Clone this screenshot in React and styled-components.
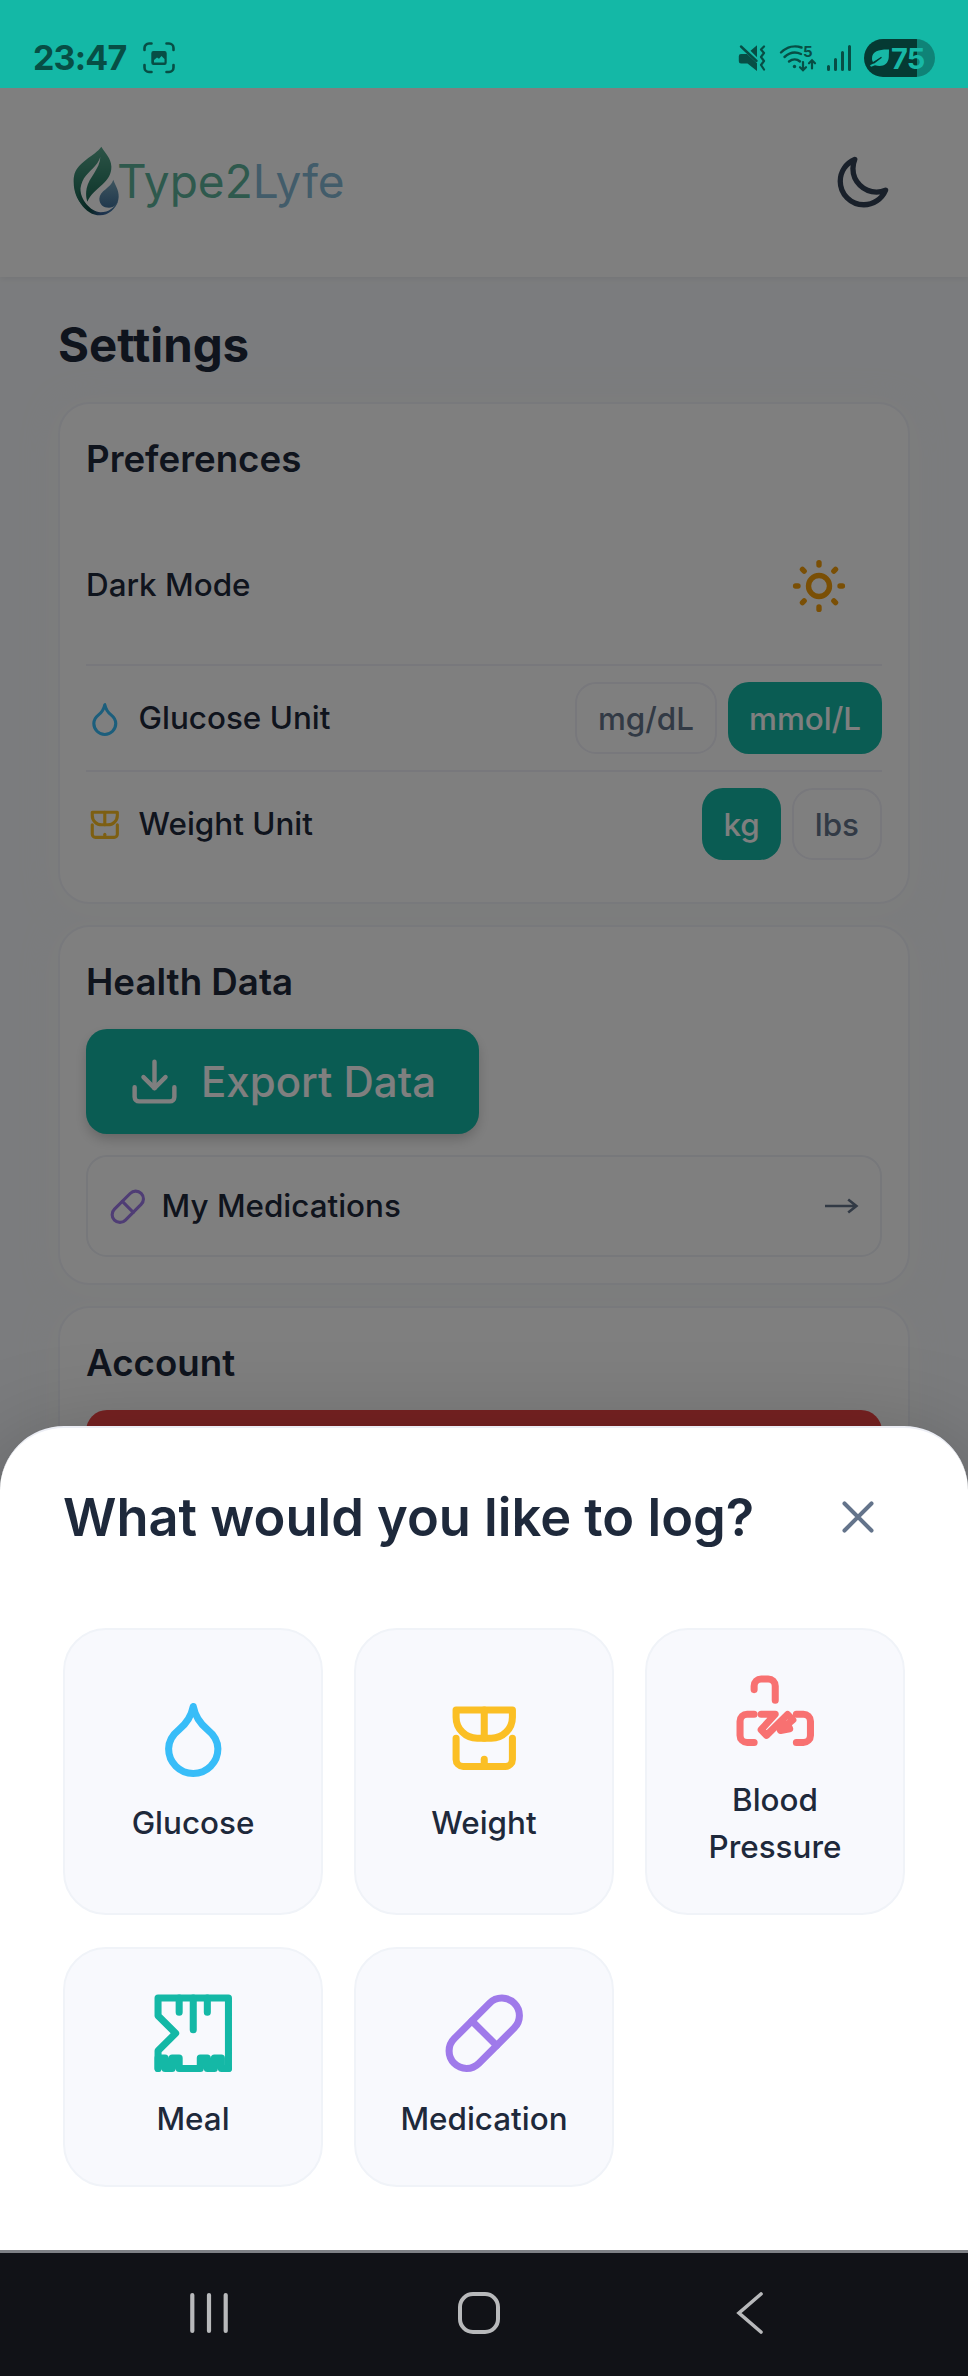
import React from 'react';
import styled, { createGlobalStyle, css } from 'styled-components';

const GlobalStyle = createGlobalStyle`
  *, *::before, *::after { box-sizing: border-box; }
  body {
    margin: 0;
    font-family: Inter, "Liberation Sans", sans-serif;
    -webkit-font-smoothing: antialiased;
  }
  button { font: inherit; border: 0; margin: 0; padding: 0; background: none; color: inherit; }
  h1, h2 { margin: 0; }
  svg { display: block; flex: none; }
`;

const Phone = styled.div`
  width: 968px;
  height: 2376px;
  display: flex;
  flex-direction: column;
  overflow: hidden;
`;

/* ---------- system bars ---------- */

const StatusBar = styled.div`
  flex: none;
  height: 88px;
  padding: 28px 33px 0 33px;
  display: flex;
  align-items: center;
  justify-content: space-between;
  background: #14b8a6;
  color: #074e45;
`;

const StatusGroup = styled.div`
  display: flex;
  align-items: center;
  gap: ${(p) => p.$gap}px;
`;

const Clock = styled.span`
  font-size: 34px;
  line-height: 60px;
  font-weight: 700;
  letter-spacing: -0.8px;
`;

const Battery = styled.div`
  width: 71px;
  height: 38px;
  margin-left: -2px;
  padding-left: 5px;
  border-radius: 19px;
  display: flex;
  align-items: center;
  gap: 1px;
  background: linear-gradient(to right, #053a33 53px, #0f8377 53px);
  color: #17b8a6;
  font-size: 29px;
  line-height: 37px;
  font-weight: 700;
  letter-spacing: -0.8px;
`;

const NavBar = styled.div`
  flex: none;
  height: 126px;
  padding: 0 83px 3px 74px;
  border-top: 3px solid #7f8186;
  background: #111217;
  display: grid;
  grid-template-columns: repeat(3, 1fr);
  align-items: center;
  justify-items: center;
`;

/* ---------- settings screen ---------- */

const Screen = styled.div`
  position: relative;
  flex: 1;
  min-height: 0;
  overflow: hidden;
  background: #f7f9fc;
`;

const Header = styled.header`
  height: 189px;
  padding: 0 43px 0 73px;
  display: flex;
  align-items: center;
  justify-content: space-between;
  background: #fff;
  box-shadow: 0 2px 6px rgba(0, 0, 0, 0.06);
`;

const Brand = styled.div`
  display: flex;
  align-items: center;
  margin-top: -4px;
`;

const BrandName = styled.span`
  margin-left: -3px;
  font-size: 46px;
  line-height: 60px;
  color: #5cb39a;
`;

const BrandTail = styled.span`
  color: #84b8d4;
`;

const ThemeToggle = styled.button`
  width: 126px;
  height: 126px;
  padding-top: 1px;
  display: flex;
  align-items: center;
  justify-content: center;
`;

const Content = styled.main`
  padding: 32px 58px 0;
`;

const PageTitle = styled.h1`
  height: 93px;
  font-size: 47.4px;
  line-height: 72px;
  font-weight: 700;
  color: #1e293b;
`;

const Card = styled.section`
  margin-bottom: 21px;
  padding: 26px;
  border: 2px solid #f1f2f9;
  border-radius: 32px;
  background: #fff;
  box-shadow: 0 4px 32px rgba(255, 255, 252, 0.5);
`;

const CardTitle = styled.h2`
  padding-top: 1px;
  margin-bottom: 20px;
  font-size: 36.7px;
  line-height: 55px;
  font-weight: 600;
  color: #1e293b;
`;

const Row = styled.div`
  display: flex;
  align-items: center;
  justify-content: space-between;
  padding: 16px 0;
  border-bottom: ${(p) => (p.$last ? 0 : 2)}px solid #f0f0f8;
`;

const Label = styled.span`
  display: flex;
  align-items: center;
  gap: 15px;
  padding-top: 1px;
  font-size: 31.4px;
  line-height: 47px;
  font-weight: 500;
  color: #1e293b;
`;

const Toggle = styled.div`
  display: flex;
  gap: 11px;
`;

const UnitButton = styled.button`
  height: 72px;
  padding: 1px 21px 0;
  border-radius: 21px;
  font-size: 31.4px;
  font-weight: 500;
  ${(p) =>
    p.$active
      ? css`
          background: #14b8a6;
          color: #fff;
        `
      : css`
          border: 2px solid #f0f0f8;
          color: #64748b;
        `}
`;

const ExportButton = styled.button`
  width: 393px;
  height: 105px;
  padding-left: 42px;
  display: flex;
  align-items: center;
  gap: 20px;
  border-radius: 21px;
  background: #14b8a6;
  color: #fff;
  font-size: 42px;
  font-weight: 500;
  box-shadow: 0 6px 14px -2px rgba(0, 0, 0, 0.24);
`;

const LinkRow = styled.div`
  height: 102px;
  margin-top: 21px;
  padding: 0 21px;
  display: flex;
  align-items: center;
  justify-content: space-between;
  border: 2px solid #eef0f6;
  border-radius: 21px;
`;

const DangerButton = styled.button`
  display: block;
  width: 100%;
  height: 105px;
  border-radius: 21px;
  background: #ef4444;
`;

/* ---------- bottom sheet ---------- */

const Overlay = styled.div`
  position: absolute;
  inset: 0;
  display: flex;
  flex-direction: column;
  justify-content: flex-end;
  background: rgba(0, 0, 0, 0.5);
`;

const Sheet = styled.div`
  padding: 50px 63px 63px;
  border-top: 2px solid #eceef5;
  border-radius: 64px 64px 0 0;
  background: #fff;
  box-shadow: 0 30px 110px rgba(0, 0, 0, 0.32);
`;

const SheetHeader = styled.div`
  display: flex;
  align-items: center;
  justify-content: space-between;
  height: 78px;
  margin-bottom: 72px;
  padding-right: 20px;
`;

const SheetTitle = styled.h2`
  font-size: 52.4px;
  line-height: 78px;
  font-weight: 600;
  color: #1e293b;
`;

const CloseButton = styled.button`
  display: flex;
`;

const TileGrid = styled.div`
  display: grid;
  grid-template-columns: repeat(3, 1fr);
  grid-template-rows: 287px 240px;
  gap: 32px 31px;
`;

const Tile = styled.button`
  display: flex;
  flex-direction: column;
  align-items: center;
  justify-content: center;
  gap: 20px;
  padding: 0 40px;
  border: 2px solid #f0f3f8;
  border-radius: 43px;
  background: #f8f9fd;
  color: ${(p) => p.$color};
`;

const TileLabel = styled.span`
  font-size: 31.4px;
  line-height: 47px;
  font-weight: 500;
  text-align: center;
  color: #1e293b;
`;

/* ---------- icons ---------- */

const Icon = ({ size, stroke = 2, color = 'currentColor', children }) => (
  <svg
    width={size}
    height={size}
    viewBox="0 0 24 24"
    fill="none"
    stroke={color}
    strokeWidth={stroke}
    strokeLinecap="round"
    strokeLinejoin="round"
  >
    {children}
  </svg>
);

const Drop = () => (
  <path d="M12 22a7 7 0 0 0 7-7c0-2-1-3.9-3-5.5s-3.5-4-4-6.5c-.5 2.500-2 4.900-4 6.500C6 11.100 5 13 5 15a7 7 0 0 0 7 7z" />
);

const Scale = () => (
  <>
    <path d="M4 4h16v2a6 6 0 0 1-6 6h-4a6 6 0 0 1-6-6z" />
    <path d="M12 4v8" />
    <path d="M4 12v6a2 2 0 0 0 2 2h12a2 2 0 0 0 2-2v-6" />
    <path d="M12 18v2" />
  </>
);

const Cuff = () => (
  <>
    <path d="M6 5V4a2 2 0 0 1 2-2h2a2 2 0 0 1 2 2v4" />
    <path d="M6 12H4a2 2 0 0 0-2 2v4a2 2 0 0 0 2 2h2" />
    <path d="M18 12h2a2 2 0 0 1 2 2v4a2 2 0 0 1-2 2h-2" />
    <path d="M8 12h4L8 16.400l1.500 1.600 6-5.900 1.500 1.500-3.500 3 2.600-.5-.6-1.300" />
  </>
);

const Meal = () => (
  <>
    <path d="M2 22v-5l5-5-5-5V2h20v20" />
    <path d="M8 2v4M12 2v9M16 2v4" />
    <path d="M2 22v-3h2v3M4 22h2v-3h2v3h6v-3h2v3h2v-3h2v3h2" />
  </>
);

const Pill = () => (
  <>
    <path d="m10.5 20.5 10-10a4.95 4.95 0 1 0-7-7l-10 10a4.95 4.95 0 1 0 7 7Z" />
    <path d="m8.5 8.5 7 7" />
  </>
);

const Download = () => (
  <>
    <path d="M21 14.6V19a2 2 0 0 1-2 2H5a2 2 0 0 1-2-2v-4.400" />
    <path d="m7 10 5 5 5-5" />
    <path d="M12 15V3" />
  </>
);

const Moon = () => (
  <path d="M21.752 15.002A9.72 9.72 0 0 1 18 15.75c-5.385 0-9.75-4.365-9.75-9.75 0-1.33.266-2.597.748-3.752A9.753 9.753 0 0 0 3 11.25C3 16.635 7.365 21 12.75 21a9.753 9.753 0 0 0 9.002-5.998Z" />
);

const SunIcon = () => (
  <svg width="56" height="56" viewBox="-28 -28 56 56" fill="none" stroke="#f59e0b" strokeWidth="5.4" strokeLinecap="round">
    <circle r="10.5" />
    {[0, 45, 90, 135, 180, 225, 270, 315].map((a) => (
      <path key={a} d="M0 -23.4V-21" transform={`rotate(${a})`} />
    ))}
  </svg>
);

const ArrowIcon = () => (
  <svg width="34" height="18" viewBox="0 0 34 18" fill="none" stroke="#64748b" strokeWidth="2.6">
    <path d="M0 9h31M23.2 2.6 31.4 9l-8.2 6.4" />
  </svg>
);

const LogoMark = () => (
  <svg width="47" height="70" viewBox="27 23 141 210">
    <defs>
      <linearGradient id="leaf" x1="0" y1="0" x2="0" y2="1">
        <stop offset="0" stopColor="#5aa88e" />
        <stop offset="0.5" stopColor="#36876f" />
        <stop offset="1" stopColor="#16604f" />
      </linearGradient>
      <linearGradient id="drop" x1="0" y1="0" x2="0" y2="1">
        <stop offset="0" stopColor="#7aa9bd" />
        <stop offset="1" stopColor="#41719b" />
      </linearGradient>
      <linearGradient id="ring" x1="0" y1="0" x2="1" y2="0">
        <stop offset="0" stopColor="#2b7a63" />
        <stop offset="0.35" stopColor="#0d4a44" />
        <stop offset="0.6" stopColor="#375f96" />
        <stop offset="1" stopColor="#5088b0" />
      </linearGradient>
    </defs>
    <path d="M112 25C92 54 38 70 30 114C25 152 38 190 66 210C48 184 42 150 60 120C76 96 100 84 109 56C108 92 74 118 68 150C65 166 66 178 70 190C80 168 98 154 116 138C134 122 143 104 142 84C141 58 124 46 112 25Z" fill="url(#leaf)" />
    <path d="M30 114C26 172 60 231 108 231C134 231 156 212 163 186C152 208 134 222 110 222C78 220 50 184 48 150C42 170 44 180 50 188C38 166 32 146 30 114Z" fill="url(#ring)" />
    <path d="M148 124C154 142 165 154 164 176C163 198 150 208 135 208C118 208 106 198 106 181C107 156 140 150 148 124Z" fill="url(#drop)" />
  </svg>
);

const CaptureIcon = () => (
  <svg width="32" height="32" viewBox="0 0 32 32" fill="none" stroke="currentColor" strokeWidth="2.6" strokeLinecap="round">
    <path d="M1.5 8V6a4.5 4.5 0 0 1 4.5-4.5h2.5M23.5 1.5H26a4.5 4.5 0 0 1 4.5 4.5v2M30.5 23v2.5A4.5 4.5 0 0 1 26 30h-2.5M8.5 30H6a4.5 4.5 0 0 1-4.5-4.5V23" />
    <path
      d="M10.5 9h11a2.2 2.2 0 0 1 2.2 2.2v9.600a2.2 2.2 0 0 1-2.2 2.2h-11a2.2 2.2 0 0 1-2.2-2.2v-9.600A2.2 2.2 0 0 1 10.5 9ZM11 20.5h10.5v-3.5l-3-3-2.5 2.8-2-1.2-3 2.400Z"
      fill="currentColor"
      fillRule="evenodd"
      stroke="none"
    />
  </svg>
);

const MuteIcon = () => (
  <svg width="28" height="28" viewBox="0 0 28 28" fill="none" stroke="currentColor" strokeLinecap="round" strokeLinejoin="round">
    <path d="M3 10h6l10 9.2V27L9.5 19.5H3A2.2 2.2 0 0 1 .8 17.3v-5.1A2.2 2.2 0 0 1 3 10ZM12.5 6.8 19 1.2v12Z" fill="currentColor" stroke="none" />
    <path d="M3 2.5 18.5 17" strokeWidth="2.4" />
    <path d="M26 2.5l-3 3 3 3.5-3 4 3 4-3 4 3 4.5" strokeWidth="2.2" />
  </svg>
);

const WifiIcon = () => (
  <svg width="38" height="30" viewBox="0 0 38 30" fill="none" stroke="currentColor" strokeLinecap="round" strokeWidth="2.4">
    <path d="M2 9.5C8 3.6 16 2.2 22.5 4.500M5.500 14c5-4.500 11-5.500 16.500-3M10 18.500c3.500-2.800 8-2.800 11 0" />
    <circle cx="15.5" cy="23.5" r="1.7" fill="currentColor" stroke="none" />
    <path d="M24 19v8m-3-2.8 3 3 3-3M33 25.5v-8m-3 2.8 3-3 3 3" strokeWidth="2.2" />
    <text x="24" y="14" fill="currentColor" stroke="none" fontSize="15" fontWeight="700" fontFamily="Inter, sans-serif">5</text>
  </svg>
);

const SignalIcon = () => (
  <svg width="26" height="28" viewBox="0 0 26 28" fill="none" stroke="currentColor" strokeLinecap="round" strokeWidth="3">
    <path d="M2.5 22.5v3M9.5 15.5v10M16.5 8.5v17M23.5 2.5v23" />
  </svg>
);

const LeafIcon = () => (
  <svg width="21" height="18" viewBox="0 0 21 18">
    <path d="M20 .6C11 .3 3 2 3 9.5c0 1.5.4 2.6 1 3.6L12 8.3 4.5 14.5 1 16.2l1 1.6 4-1.6c7 2.4 13.5-.8 13.8-8.2.1-3 .2-5 .2-7.4Z" fill="currentColor" />
    <path d="M4.5 14.2 12.5 8.2" stroke="#053a33" strokeWidth="1.3" />
  </svg>
);

const RecentsIcon = () => (
  <svg width="38" height="42" viewBox="0 0 38 42" stroke="#b8b9bb" strokeWidth="4.2" strokeLinecap="round">
    <path d="M2.3 3v36M19 3v36M35.7 3v36" />
  </svg>
);

const HomeIcon = () => (
  <svg width="42" height="42" viewBox="0 0 42 42" fill="none" stroke="#b8b9bb" strokeWidth="4">
    <rect x="2" y="2" width="38" height="38" rx="13" />
  </svg>
);

const BackIcon = () => (
  <svg width="28" height="42" viewBox="0 0 28 42" fill="none" stroke="#b8b9bb" strokeWidth="3.6" strokeLinecap="round">
    <path d="M25 2 3 21l22 19" />
  </svg>
);

const TILES = [
  { label: 'Glucose', color: '#38bdf8', glyph: <Drop /> },
  { label: 'Weight', color: '#fbbf24', glyph: <Scale /> },
  { label: 'Blood Pressure', color: '#f87171', glyph: <Cuff /> },
  { label: 'Meal', color: '#14b8a6', glyph: <Meal /> },
  { label: 'Medication', color: '#9f7aea', glyph: <Pill /> },
];

export default function App() {
  return (
    <Phone>
      <GlobalStyle />
      <StatusBar>
        <StatusGroup $gap={16}>
          <Clock>23:47</Clock>
          <CaptureIcon />
        </StatusGroup>
        <StatusGroup $gap={9}>
          <StatusGroup $gap={13}>
            <MuteIcon />
            <WifiIcon />
          </StatusGroup>
          <StatusGroup $gap={14}>
            <SignalIcon />
            <Battery>
              <LeafIcon />
              <span>75</span>
            </Battery>
          </StatusGroup>
        </StatusGroup>
      </StatusBar>

      <Screen>
        <Header>
          <Brand>
            <LogoMark />
            <BrandName>
              Type2<BrandTail>Lyfe</BrandTail>
            </BrandName>
          </Brand>
          <ThemeToggle>
            <Icon size={58} stroke={2.2} color="#334155"><Moon /></Icon>
          </ThemeToggle>
        </Header>

        <Content>
          <PageTitle>Settings</PageTitle>

          <Card>
            <CardTitle>Preferences</CardTitle>
            <Row>
              <Label>Dark Mode</Label>
              <ThemeToggle><SunIcon /></ThemeToggle>
            </Row>
            <Row>
              <Label>
                <Icon size={37.6} color="#38bdf8"><Drop /></Icon>
                Glucose Unit
              </Label>
              <Toggle>
                <UnitButton>mg/dL</UnitButton>
                <UnitButton $active>mmol/L</UnitButton>
              </Toggle>
            </Row>
            <Row $last>
              <Label>
                <Icon size={37.6} color="#fbbf24"><Scale /></Icon>
                Weight Unit
              </Label>
              <Toggle>
                <UnitButton $active>kg</UnitButton>
                <UnitButton>lbs</UnitButton>
              </Toggle>
            </Row>
          </Card>

          <Card>
            <CardTitle>Health Data</CardTitle>
            <ExportButton>
              <Icon size={53}><Download /></Icon>
              Export Data
            </ExportButton>
            <LinkRow>
              <Label>
                <Icon size={37.6} color="#9f7aea"><Pill /></Icon>
                My Medications
              </Label>
              <ArrowIcon />
            </LinkRow>
          </Card>

          <Card>
            <CardTitle>Account</CardTitle>
            <DangerButton />
          </Card>
        </Content>

        <Overlay>
          <Sheet>
            <SheetHeader>
              <SheetTitle>What would you like to log?</SheetTitle>
              <CloseButton>
                <Icon size={54} stroke={1.8} color="#64748b"><path d="M6 18 18 6M6 6l12 12" /></Icon>
              </CloseButton>
            </SheetHeader>
            <TileGrid>
              {TILES.map((t) => (
                <Tile key={t.label} $color={t.color}>
                  <Icon size={84.5}>{t.glyph}</Icon>
                  <TileLabel>{t.label}</TileLabel>
                </Tile>
              ))}
            </TileGrid>
          </Sheet>
        </Overlay>
      </Screen>

      <NavBar>
        <RecentsIcon />
        <HomeIcon />
        <BackIcon />
      </NavBar>
    </Phone>
  );
}
